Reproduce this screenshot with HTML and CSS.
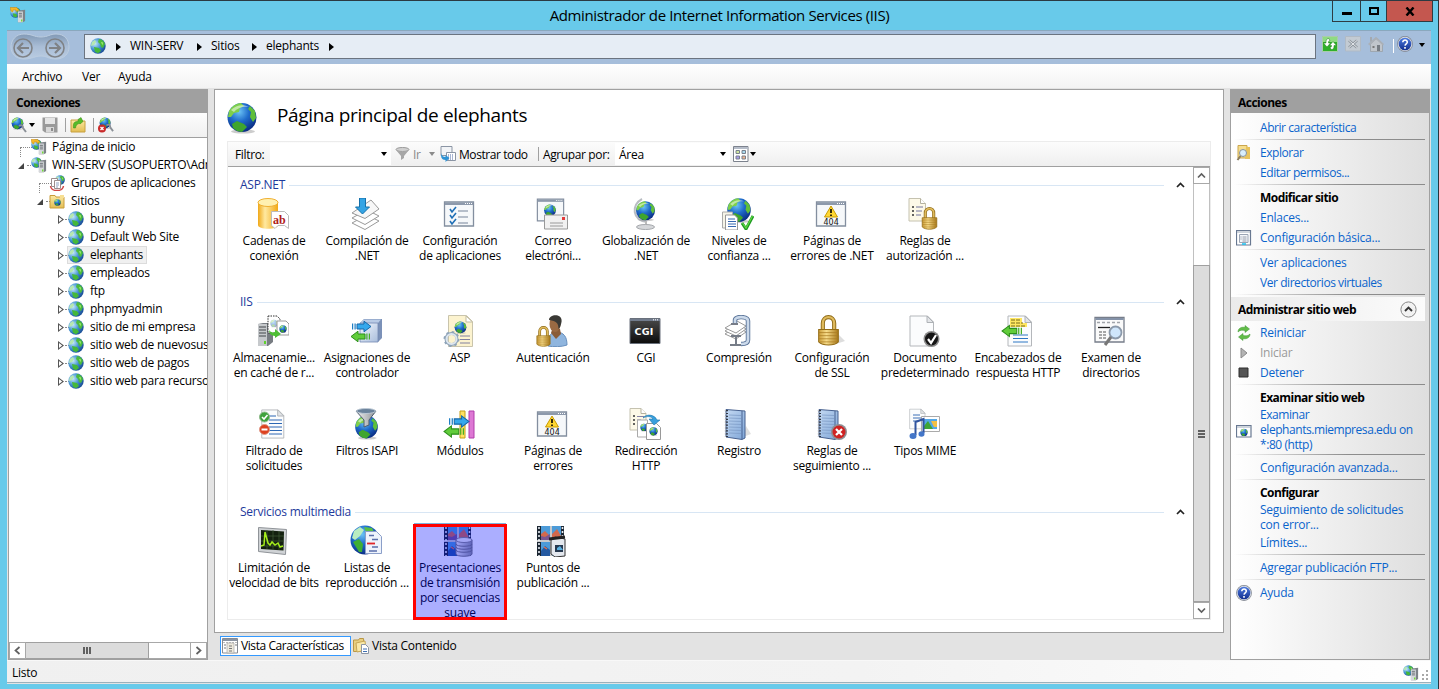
FILE: index.html
```
<!DOCTYPE html>
<html lang="es">
<head>
<meta charset="utf-8">
<title>Administrador de Internet Information Services (IIS)</title>
<link rel="stylesheet" href="styles.css">
</head>
<body>
<svg class="sprite" aria-hidden="true">
  <defs>
    <radialGradient id="gBlue" cx=".4" cy=".3" r=".75"><stop offset="0" stop-color="#6cc4f5"/><stop offset=".45" stop-color="#1f6ccb"/><stop offset="1" stop-color="#08267c"/></radialGradient>
    <radialGradient id="gSky" cx=".3" cy=".35" r=".8"><stop offset="0" stop-color="#c5eafa"/><stop offset=".5" stop-color="#3f8fd0"/><stop offset="1" stop-color="#123f8a"/></radialGradient>
    <linearGradient id="gGold" x1="0" x2="1"><stop offset="0" stop-color="#c99a35"/><stop offset=".4" stop-color="#f7dc8a"/><stop offset="1" stop-color="#a87818"/></linearGradient>
    <linearGradient id="gYel" x1="0" x2="1"><stop offset="0" stop-color="#f0a818"/><stop offset=".35" stop-color="#ffe9a0"/><stop offset="1" stop-color="#f2a814"/></linearGradient>
    <linearGradient id="gGrey" x1="0" x2="1"><stop offset="0" stop-color="#f2f2f2"/><stop offset="1" stop-color="#8d9196"/></linearGradient>
    <linearGradient id="gFold" x1="0" x2="0" y1="0" y2="1"><stop offset="0" stop-color="#fbe9a4"/><stop offset="1" stop-color="#e3bd52"/></linearGradient>
    <linearGradient id="gBlk" x1="0" x2="0" y1="0" y2="1"><stop offset="0" stop-color="#4a4a4a"/><stop offset="1" stop-color="#0c0c0c"/></linearGradient>
    <linearGradient id="gCube" x1="0" x2="1" y1="0" y2="1"><stop offset="0" stop-color="#f4f8ff"/><stop offset="1" stop-color="#a9bddb"/></linearGradient>
    <linearGradient id="gBook" x1="0" x2="1" y1="0" y2="1"><stop offset="0" stop-color="#c4d9f2"/><stop offset="1" stop-color="#7fa6d8"/></linearGradient>
    <linearGradient id="gHelp" x1="0" x2="0" y1="0" y2="1"><stop offset="0" stop-color="#4d7be0"/><stop offset="1" stop-color="#132f8e"/></linearGradient>
    <linearGradient id="gNav" x1="0" x2="0" y1="0" y2="1"><stop offset="0" stop-color="#8199b5"/><stop offset=".5" stop-color="#a9bdd6"/><stop offset="1" stop-color="#b9cce2"/></linearGradient>
  </defs>

  <symbol id="globe" viewBox="0 0 32 32">
    <ellipse cx="17" cy="29.5" rx="12" ry="2" fill="#999" opacity=".5"/>
    <circle cx="16" cy="15.500" r="14.500" fill="url(#gBlue)"/>
    <path d="M3 9C6 4 10 1.500 15 1l3 3-4 2-1 4-5 1-3 4-3 0z" fill="#7fd04a"/>
    <path d="M24 4l5 5 1 7-3 4-3-5 1-5-3-3z" fill="#5fbf3a"/>
    <path d="M6 22l5-3 7 3 3 3-5 5-5-1-4-3z" fill="#3fa52e"/>
    <path d="M5 8c5-5 12-6 18-3-6-1-12 1-15 5z" fill="#fff" opacity=".5"/>
  </symbol>
  <symbol id="site" viewBox="0 0 16 16">
    <circle cx="8" cy="8" r="7.700" fill="url(#gSky)"/>
    <path d="M9 1c3 .5 5 2 6 5l-2 4-2-1-1-3-2-2z" fill="#4cba3c"/>
    <path d="M4 9l5 1 2 3-3 2.300-3-1.500z" fill="#45b83a"/>
    <path d="M2 4l3-2 1 2-2 3-3 1z" fill="#b6e8b0"/>
    <path d="M11 4l2 .5-.5 3z" fill="#a3ea76"/>
  </symbol>
  <symbol id="tower" viewBox="0 0 10 14">
    <path d="M2.500 1L9 0v12.500L6.500 14H1V2z" fill="#7d8288"/><path d="M1 2h5.500v12H1z" fill="#d5d8db"/><path d="M2 4h3.500M2 6h3.500M2 8h3.500" stroke="#60656b"/><path d="M4.500 11h1.500v2H4.500z" fill="#6ede2c"/>
  </symbol>
  <symbol id="server" viewBox="0 0 16 16">
    <use href="#site" x="0" y="0" width="11" height="11"/><use href="#tower" x="7" y="2" width="9" height="14"/>
  </symbol>
  <symbol id="home" viewBox="0 0 16 16">
    <use href="#server" width="16" height="16"/><path d="M0 .5h5l1-.5 3 3-3 1.500V3H3v2L1 4z" fill="#f5b82b" stroke="#c98408" stroke-width=".5"/>
  </symbol>
  <symbol id="pools" viewBox="0 0 16 16">
    <use href="#site" x="6" y="0" width="10" height="10"/><path d="M1.500 11c1 6 12 6 13 0" fill="none" stroke="#d04545" stroke-width="1.500"/>
    <path d="M2.500 3.500h6v8h-6z" fill="#fff" stroke="#9b8d8d"/><path d="M5.500 5.500h6v8h-6z" fill="#fff" stroke="#9b8d8d"/><path d="M7 8h3M7 10h3M7 12h2" stroke="#8fa1c0"/>
  </symbol>
  <symbol id="sitefolder" viewBox="0 0 16 16">
    <path d="M1 2.500h5l1 1.500h8v11H1z" fill="url(#gFold)" stroke="#c99c3b"/><path d="M11 2h4v3h-4z" fill="#f7df93"/><use href="#globe" x="5" y="6" width="7" height="7"/>
  </symbol>
  <symbol id="connect" viewBox="0 0 16 16">
    <use href="#globe" x="0" y="0" width="13" height="13"/><path d="M8 9c3-2 4 0 4 2l3 4" fill="none" stroke="#8b9097" stroke-width="2"/>
  </symbol>
  <symbol id="disconnect" viewBox="0 0 16 16">
    <use href="#connect" x="1" width="15" height="15"/><circle cx="4" cy="11.500" r="4" fill="#c92a2a"/><path d="M2.500 10l3 3m0-3l-3 3" stroke="#fff" stroke-width="1.300"/>
  </symbol>
  <symbol id="save" viewBox="0 0 16 16">
    <path d="M.5.5h15v15H3l-2.500-2z" fill="#9a9a9a"/><path d="M3 1h10v6H3z" fill="#e6e6e6"/><path d="M4 10h8v5H4z" fill="#d8d8d8"/><path d="M9 11h2v3H9z" fill="#8c8c8c"/>
  </symbol>
  <symbol id="upfolder" viewBox="0 0 16 16">
    <path d="M1 3h7l1 1h6v11H1z" fill="url(#gFold)" stroke="#c8a040"/><path d="M3.500 11C3 6 4 4.500 8 4.500V2.500l3-2 2 4-3 2.500V6.500C7 6.500 6 8 5.500 11z" fill="#56bb29" stroke="#358b15" stroke-width=".5"/>
  </symbol>
  <symbol id="funnel" viewBox="0 0 16 16"><ellipse cx="7.500" cy="3.500" rx="6.500" ry="2" fill="#d0d0d0" stroke="#9b9b9b"/><path d="M1 4l5 6v4l3-2v-2l5-6c-3 2-10 2-13 0z" fill="#a6a6a6"/></symbol>
  <symbol id="showall" viewBox="0 0 16 16">
    <path d="M1 .5h11v9H1z" fill="#f2f4f7" stroke="#8b95a4"/><path d="M6.500 6.500h9v8h-9z" fill="#fff" stroke="#8b95a4"/><path d="M8 9h6M8 11h6M8 13h6" stroke="#506ba5" stroke-dasharray="1 1"/><path d="M1.500 7c0 3 2 4 4 4V9l4 3-4 4v-2c-4 0-5-3-4-7z" fill="#2c92d5"/>
  </symbol>
  <symbol id="views" viewBox="0 0 16 16">
    <path d="M.5.500h14.500v15H.5z" fill="#fff" stroke="#7c828d"/><path d="M1 1h14v2H1z" fill="#b6bdc9"/><path d="M3 4.500h3.500v3H3z" fill="#cfe6a0" stroke="#78808c"/><path d="M9 4.500h3.500v3H9z" fill="#a9d9ee" stroke="#78808c"/><path d="M3 10h3.500v3H3z" fill="#a89bea" stroke="#78808c"/><path d="M9 10h3.500v3H9z" fill="#f0b58f" stroke="#78808c"/>
  </symbol>
  <symbol id="help" viewBox="0 0 16 16">
    <circle cx="8" cy="8" r="7.900" fill="#7f858f"/><circle cx="8" cy="8" r="7.200" fill="#d7dbe4"/><circle cx="8" cy="8" r="6.300" fill="url(#gHelp)"/><path d="M5.800 6.200c0-3 4.600-2.800 4.500 0C10.200 7.800 8.100 7.800 8 9.600M8 11v1.700" fill="none" stroke="#fff" stroke-width="1.600"/>
  </symbol>
  <symbol id="refresh" viewBox="0 0 16 16">
    <path d="M.5.500h15v15H.5z" fill="#2fb02a" stroke="#a9cca9"/><path d="M1 1h14v5H1z" fill="#8fdb82"/><path d="M7 2.500C4 2.500 4 5 4 7H1.500L5 11l3.500-4H6.500c0-2 0-2 1.500-2zM9 13.500c3 0 3-2 3-4h2.500L11 5.500 7.500 9.500h2c0 1.500 0 1.500-1.500 1.500z" fill="#fff" stroke="#187c17" stroke-width=".5"/>
  </symbol>
  <symbol id="stopx" viewBox="0 0 16 16"><path d="M.5.500h15v14.500H.5z" fill="#c3cbd3" stroke="#b0bac5"/><path d="M4 4.500l8 7m0-7l-8 7" stroke="#8f979f" stroke-width="2.600"/><path d="M4 4.500l8 7m0-7l-8 7" stroke="#e4e8ec" stroke-width="1"/></symbol>
  <symbol id="house" viewBox="0 0 16 16"><path d="M2.500 8v7.500h12V8L8.500 2z" fill="#c0c5cb" stroke="#989fa7" stroke-width=".8"/><path d="M0 8L8 .8 16 8l-1 1.500-7-6-6.500 6z" fill="#aab0b7"/><path d="M2 1h2v4l-2 1z" fill="#a3a9b0"/><path d="M9 9h3v6H9z" fill="#767c83"/><path d="M4.500 10h2v2h-2z" fill="#777"/></symbol>

  <symbol id="winframe" viewBox="0 0 32 26"><path d="M1.500 1h29v24h-29z" fill="#f6f8fa" stroke="#838e9f" stroke-width="1.300"/><path d="M2 1.500h28v2.500H2z" fill="#8d99ab"/><path d="M22 2.500h7" stroke="#fff" stroke-dasharray="1 1"/></symbol>
  <symbol id="page" viewBox="0 0 26 32"><path d="M1 1h17.500l6 6v24H1z" fill="#fbfcfd" stroke="#b4b7bb"/><path d="M18 1v6.500h6.500z" fill="#e3e5e8" stroke="#aeb2b6"/></symbol>
  <symbol id="lock" viewBox="0 0 20 30"><path d="M4.500 15V8C4.500 0 15.500 0 15.500 8v7" fill="none" stroke="#8f6b18" stroke-width="4"/><path d="M4.500 15V8C4.500 0 15.500 0 15.500 8v7" fill="none" stroke="#dfba5c" stroke-width="2.200"/><path d="M.5 14h19v12c-4 4-15 4-19 0z" fill="url(#gGold)" stroke="#946d16"/><path d="M1 17h18M1 20h18M1 23h18M2 26h16" stroke="#a97c22" stroke-width=".7"/></symbol>
  <symbol id="arrR" viewBox="0 0 20 12"><path d="M5 3.500h7V.700L19 6l-7 5.300V8.500H5z" fill="#35a8ec" stroke="#1667a8"/><path d="M0 3h1.200v6H0zM2.500 3h1.200v6H2.500z" fill="#1e7ec4"/></symbol>
  <symbol id="arrL" viewBox="0 0 20 12"><path d="M15 3.500H8V.700L1 6l7 5.300V8.500h7z" fill="#61cc3b" stroke="#2d8f1b"/><path d="M20 3h-1.200v6H20zM17.500 3h-1.200v6h1.200z" fill="#46b028"/></symbol>
  <symbol id="notebook" viewBox="0 0 32 32"><path d="M21 29l8-3-5-8z" fill="#ccc" opacity=".6"/><path d="M4 1.500l19 1.500v27l-3 1.500L4 29z" fill="url(#gBook)" stroke="#47618f"/><path d="M20 3v28" stroke="#47618f"/><path d="M7 7l12 .5M7 10l12 .5M7 13l12 .5M7 16l12 .5M7 19l12 .5M7 22l12 .5M7 25l12 .5" stroke="#7f9dc8" stroke-width=".8"/><path d="M4.500 2v27" stroke="#303642" stroke-width="3" stroke-dasharray="1.200 1.700"/><path d="M3 2v27" stroke="#e9edf2" stroke-width="1.500" stroke-dasharray="1.200 1.700"/></symbol>
  <symbol id="film" viewBox="0 0 32 32"><path d="M1 1h27v30H1z" fill="#1d2733"/><path d="M5 1h9v14H5zM16 1h9v14h-9zM5 17h9v14H5zM16 17h9v14h-9z" fill="#4c9bd8"/><path d="M5 9l4-3 5 5v4H5zM16 9l5-5 4 7v4h-9z" fill="#d2694c"/><path d="M5 11l4 1 5-3v6H5z" fill="#7a5690"/><path d="M5 26l4-5 5 4v6H5z" fill="#255aa2"/><path d="M8 22l3 2" stroke="#e0704c" stroke-width="1.500"/><path d="M3 2v29M26.500 2v29" stroke="#e8edf2" stroke-width="1.600" stroke-dasharray="2 2"/><path d="M1 16h28M15 0v32" stroke="#fff" stroke-width="1.500"/></symbol>

  <symbol id="i-comp" viewBox="0 0 32 32"><path d="M2 25l15-8 12 6-14 8.500z" fill="#fff" stroke="#999"/><path d="M2 20l15-8 12 6-14 8.500z" fill="#fff" stroke="#999"/><path d="M2 15l19-13 8 9-14 9.500z" fill="#f7f7f7" stroke="#999"/><path d="M9.500 0h6v9h4L12.500 16l-7-7h4z" fill="#35a4e4" stroke="#1570aa"/></symbol>
  <symbol id="i-appcfg" viewBox="0 0 32 32"><use href="#winframe" y="3" width="32" height="26"/><path d="M7 11l2 3 4-5M7 17l2 3 4-5M7 23l2 3 4-5" fill="none" stroke="#1f6fb6" stroke-width="1.600"/><path d="M15 13h10M15 19h10M15 25h10" stroke="#77849a"/></symbol>
  <symbol id="i-mail" viewBox="0 0 32 32"><use href="#winframe" x="0" y="0" width="29" height="24"/><use href="#globe" x="7" y="6" width="14" height="13"/><path d="M8.500 17h23v14h-23z" fill="#f1f1f1" stroke="#999"/><path d="M26 19h3v3h-3z" fill="#e23b3b"/><path d="M14 25h13M14 28h13" stroke="#999"/></symbol>
  <symbol id="i-glob" viewBox="0 0 32 32"><path d="M13 1C2 7 3 22 18 24" fill="none" stroke="#b9bdc2" stroke-width="2"/><use href="#globe" x="6" y="2" width="21" height="22"/><path d="M16 23h2v4h-2z" fill="#bbb"/><ellipse cx="16.500" cy="29" rx="9" ry="2.500" fill="#d5d7da" stroke="#a5a8ac"/></symbol>
  <symbol id="i-trust" viewBox="0 0 32 32"><use href="#globe" x="4" y="-1" width="26" height="27"/><path d="M.5 14h10v16H.5z" fill="#f6f4e8" stroke="#aaa"/><path d="M3.500 17h9l3 3v12h-12z" fill="#fff" stroke="#999"/><path d="M6 21h7M6 23.500h8M6 26h8M6 28.500h8" stroke="#3567b0"/><path d="M20 25l4 6 7-13" fill="none" stroke="#1f9a22" stroke-width="3"/><path d="M20.500 25l3.500 5 6.500-12" fill="none" stroke="#5ed845" stroke-width="1.200"/></symbol>
  <symbol id="i-auth" viewBox="0 0 32 32"><path d="M1 .5h11.500l5 5V23H1z" fill="#fdf9e8" stroke="#c5c2b0"/><path d="M12.500.500v5h5" fill="#fff" stroke="#b5b2a0"/><path d="M4 9h2M4 13h2M4 17h2" stroke="#333" stroke-width="1.600"/><path d="M8 9h7M8 13h6M8 17h5" stroke="#7476a0"/><use href="#lock" x="13" y="9" width="17" height="23"/></symbol>

  <symbol id="i-cache" viewBox="0 0 32 32"><path d="M1 9l5-1h10v19l-5 4H1z" fill="#777c82"/><path d="M1 9h9v22H1z" fill="#c6c9cc"/><path d="M2 12h7M2 15h7M2 18h7M2 21h7" stroke="#42464b"/><path d="M7 26h2v3H7z" fill="#5ed22c"/><path d="M11 1h9l3 3v14H11z" fill="#fff" stroke="#333" stroke-dasharray="1.500 1"/><use href="#globe" x="13" y="4" width="8" height="9" opacity=".4"/><path d="M20 6h9l3 3v11H20z" fill="#fff" stroke="#999"/><use href="#globe" x="22" y="10" width="8" height="8"/><path d="M12 15c1 2 4 3 6 2v-3l6 5-6 4v-2c-4 0-6-3-6-6z" fill="#4fbf35"/></symbol>
  <symbol id="i-map" viewBox="0 0 32 32"><path d="M10 8l4-4h18v19l-4 4H10z" fill="#7b91b8"/><path d="M10 8l4-3.500h17l-3 3.500z" fill="#b9cbe6"/><path d="M10 8h18v19H10z" fill="url(#gCube)" stroke="#7389b2" stroke-width=".8"/><use href="#arrR" x="2" y="5" width="20" height="13"/><use href="#arrL" x="0" y="15" width="20" height="13"/></symbol>
  <symbol id="i-asp" viewBox="0 0 32 32"><path d="M5.500.500h18l6 6v25h-24z" fill="#fcf3cf" stroke="#c9c4ac"/><path d="M23 1v6h6.500z" fill="#fff" stroke="#c2bda2"/><use href="#globe" x="11" y="6" width="13" height="13"/><path d="M17 21h10M17 24.500h10M17 28h10" stroke="#8180a0"/><circle cx="8.500" cy="24" r="5.500" fill="none" stroke="#8ea3b8" stroke-width="3"/><circle cx="8.500" cy="24" r="7" fill="none" stroke="#8ea3b8" stroke-width="2" stroke-dasharray="2.500 3"/><circle cx="8.500" cy="24" r="5" fill="none" stroke="#dde6ee" stroke-width="2"/></symbol>
  <symbol id="i-user" viewBox="0 0 32 32"><path d="M12 31c-1-9 2-13 8-14 8 0 11 5 11 13-5 2-14 2-19 1z" fill="#8fb5de" stroke="#678fbd"/><path d="M17 12l7 2 1 5-5 5-5-6z" fill="#8a5c38"/><ellipse cx="19" cy="9" rx="5.500" ry="8" fill="#9a6a43"/><path d="M13 5c0-6 14-7 12.500 2-1 5-2 6-3 7 0-6-2-8-9.500-9z" fill="#3a3935"/><use href="#lock" x="0" y="11" width="15" height="21"/></symbol>
  <symbol id="i-press" viewBox="0 0 32 32"><path d="M3 19l12-8 9 6-10 7z" fill="#fff" stroke="#999"/><path d="M3 16l12-8 9 6-10 7z" fill="#fff" stroke="#999"/><path d="M3 13l12-7 9 5-10 7z" fill="#fff" stroke="#999"/><path d="M13 10V5c0-4 13-4 13 1v19c0 4-4 4-7 4" fill="none" stroke="#597398" stroke-width="4.500"/><path d="M13 10V5c0-4 13-4 13 1v19c0 4-4 4-7 4" fill="none" stroke="#cbd9ea" stroke-width="2.700"/><path d="M9 9h7M14 21v8M8 30h11M9 21h10" stroke="#777d88" stroke-width="2"/></symbol>
  <symbol id="i-ssl" viewBox="0 0 32 32"><path d="M21 29l9-3-7-7z" fill="#ddd"/><use href="#lock" x="3" y="0" width="21" height="31"/></symbol>
  <symbol id="i-doc" viewBox="0 0 32 32"><use href="#page" x="1" y="0" width="26" height="32"/><circle cx="23.500" cy="24" r="8" fill="#8c8c8c"/><circle cx="23.500" cy="24" r="6.500" fill="#161616"/><path d="M20 24l3 4 5-8" fill="none" stroke="#fff" stroke-width="2.200"/></symbol>
  <symbol id="i-hdr" viewBox="0 0 32 32"><use href="#page" x="6" y="0" width="26" height="32"/><path d="M9 3h12v5h5v4H9z" fill="#ffe761"/><path d="M10 5h10M10 8h12M10 11h15" stroke="#786a1a" stroke-dasharray="4 1"/><path d="M12 20h15M12 23.500h15M12 27h15" stroke="#2c76c4"/><use href="#arrL" x="0" y="9" width="21" height="14"/></symbol>
  <symbol id="i-browse" viewBox="0 0 32 32"><path d="M1 2.500h29v24.500H1z" fill="#fafafa" stroke="#777e8a" stroke-width="1.300"/><path d="M1.500 3h28v2h-28z" fill="#8492a8"/><path d="M3 7.500h23" stroke="#a0a4aa" stroke-width="1.500" stroke-dasharray="3 2"/><path d="M4 12.500h12" stroke="#222" stroke-width="1.300"/><path d="M5 17h8M5 20h8M5 23h8" stroke="#555" stroke-dasharray="3 1"/><circle cx="21.500" cy="17.500" r="6" fill="#cfe6fb" stroke="#8b99aa" stroke-width="1.800"/><path d="M17 22l-6 8" stroke="#777" stroke-width="3"/></symbol>
  <symbol id="i-filter" viewBox="0 0 32 32"><use href="#page" x="3" y="1" width="26" height="30"/><path d="M12 8h7M12 12h13M12 15.500h13M12 19h13M12 22.500h13M12 26h13" stroke="#2c67b4"/><circle cx="7.500" cy="9" r="5" fill="#3fa23c" stroke="#8dba8a"/><path d="M5 9l2 2 3.500-4" fill="none" stroke="#fff" stroke-width="1.600"/><circle cx="7.500" cy="21.500" r="5" fill="#dd4120" stroke="#e09a88"/><path d="M4.500 21.500h6" stroke="#fff" stroke-width="2"/></symbol>
  <symbol id="i-isapi" viewBox="0 0 32 32"><use href="#globe" x="4" y="7" width="25" height="25"/><path d="M6 3l8 9v7l5-2v-5l7-9z" fill="url(#gGrey)" stroke="#4d5c6c"/><ellipse cx="16" cy="3" rx="9.500" ry="2.500" fill="#6a829b" stroke="#bcc8d4"/></symbol>
  <symbol id="i-mod" viewBox="0 0 32 32"><path d="M17 3h5v27h-5z" fill="#ffe162" stroke="#c49f18"/><path d="M26 3h5v27h-5z" fill="#dd78d4" stroke="#b13cab"/><use href="#arrR" x="6" y="7" width="21" height="13"/><use href="#arrL" x="0" y="17" width="21" height="13"/></symbol>
  <symbol id="i-redir" viewBox="0 0 32 32"><path d="M1 .5h11l5 5V22H1z" fill="#fdf9e8" stroke="#c5c2b0"/><path d="M12 .5v5h5" fill="#fff" stroke="#b5b2a0"/><path d="M4 8h2M4 12h2M4 16h2" stroke="#333" stroke-width="1.600"/><path d="M8 8.500h7M8 12h4" stroke="#8482a8"/><path d="M8.500 12h10v17h-10z" fill="#fff" stroke="#aaa"/><use href="#globe" x="11" y="15" width="8" height="9"/><path d="M17.500 15.500h10l4 4v12h-14z" fill="#fff" stroke="#999"/><use href="#globe" x="20" y="19" width="9" height="9"/><path d="M14 10c4-5 12-3 14 2h3l-6 5-5-6h4c-2-3-6-3-10-1z" fill="#39a0dd" stroke="#1d75ac" stroke-width=".6"/></symbol>
  <symbol id="i-log" viewBox="0 0 32 32"><use href="#notebook" width="32" height="32"/></symbol>
  <symbol id="i-trace" viewBox="0 0 32 32"><use href="#notebook" width="32" height="32"/><circle cx="24" cy="24" r="8" fill="#8e9095"/><circle cx="24" cy="24" r="6.500" fill="#cf2323"/><path d="M21 21l6 6m0-6l-6 6" stroke="#fff" stroke-width="2.200"/></symbol>
  <symbol id="i-mime" viewBox="0 0 32 32"><use href="#page" x="1" y="0" width="17" height="22"/><path d="M5 7h7M5 10h8M5 13h5" stroke="#3a6fb6"/><path d="M13.500 8.500h18v15h-18z" fill="#fff" stroke="#aaa"/><path d="M16 11h13v10H16z" fill="#54a8e6"/><path d="M16 18l4-5 5 8h-9z" fill="#3fa536"/><path d="M23 13h6v6h-3z" fill="#f3c045"/><path d="M7.500 27V14l8-3v14" fill="none" stroke="#30549f" stroke-width="2"/><ellipse cx="5" cy="28" rx="3.500" ry="3" fill="#4476c8"/><ellipse cx="13.500" cy="26" rx="3" ry="2.800" fill="#4476c8"/></symbol>

  <symbol id="i-rate" viewBox="0 0 32 32"><path d="M1.500 2.500l28 2-1 25-27-3z" fill="#cfd2d5" stroke="#909499"/><path d="M4 5l23 1.500-.5 19L4 24z" fill="#13200f"/><path d="M4 11h23M4 16h23M4 21h23M10 5v19M16 5v20M22 6v19" stroke="#3f5b36" stroke-width=".7"/><path d="M4 21l3-1 1-13 3 11 2 2 2-3 3 3 3-2 2 4 3-1" fill="none" stroke="#a5ee1c" stroke-width="1.500"/></symbol>
  <symbol id="i-list" viewBox="0 0 32 32"><circle cx="15" cy="15" r="14.500" fill="url(#gBlue)"/><path d="M4 6l6-4 4 3-4 6-5 4-3-2z" fill="#b9edc0"/><path d="M3 17l6-3 4 5-1 8-3 0z" fill="#3fae35"/><path d="M14 2l8 1 2 4h-8z" fill="#58bf45"/><path d="M15.500 6.500h11l5 5v17h-16z" fill="#eef3fc" stroke="#8b9fc9"/><path d="M19 10.500h5M22 14.500h6M22 22h6M19 26h8" stroke="#5a6faa" stroke-width="1.300"/><path d="M17 18.500h8" stroke="#e0262a" stroke-width="1.800"/></symbol>
  <symbol id="i-smooth" viewBox="0 0 32 32"><use href="#film" width="32" height="32"/><path d="M13 15v14c0 3 16 3 16 0V15z" fill="url(#gGrey)" stroke="#777"/><ellipse cx="21" cy="15" rx="8" ry="2.500" fill="#f0f0f0" stroke="#888"/><path d="M13 19c0 3 16 3 16 0M13 22c0 3 16 3 16 0M13 25c0 3 16 3 16 0" fill="none" stroke="#777"/></symbol>
  <symbol id="i-pub" viewBox="0 0 32 32"><use href="#film" width="32" height="32"/><path d="M15 15l4-3 10 2v17l-10 1-4-3z" fill="#e4e8ee" stroke="#333"/><path d="M19 20h8v7h-8z" fill="#263950"/><path d="M21 23l3-2 3 4h-6z" fill="#5ab0e0"/><path d="M13 14l16-2" stroke="#222" stroke-width="3"/></symbol>

  <symbol id="explore" viewBox="0 0 16 16"><path d="M2 .5h9V13H2z" fill="#f6de8d" stroke="#cba64d"/><path d="M10 2h4v12H9z" fill="#e8c35c"/><circle cx="7" cy="8" r="3.500" fill="#d9effc" stroke="#85909c"/><path d="M4.500 11l-3 4" stroke="#8b7d5d" stroke-width="2"/></symbol>
  <symbol id="basic" viewBox="0 0 16 16"><path d="M.5.500h14v14.500H.5z" fill="#fff" stroke="#687891" stroke-width="1.200"/><path d="M1 2h13" stroke="#9eaaba"/><path d="M3.500 4.500h8.500v8H3.500z" fill="#f4f7fb" stroke="#9ba5b5"/><path d="M6.500 7h4M6.500 9h4M6.500 11h4" stroke="#7d8798" stroke-width=".8"/><path d="M4.500 7h1M4.500 9h1" stroke="#7d8798"/><path d="M6 14h4" stroke="#17c0f0" stroke-width="1.500"/></symbol>
  <symbol id="restart" viewBox="0 0 16 16"><path d="M2 7c0-4 4-5.500 7-4.500V.500l4.500 3.500L9 7.500v-2C6 5 4 5 2 7zM14 9c0 4-4 5.500-7 4.500v2L2.500 12 7 8.500v2c3 .5 5 .5 7-1.500z" fill="#62bd49" stroke="#3d9530" stroke-width=".5"/></symbol>
  <symbol id="start" viewBox="0 0 16 16"><path d="M5 3l6 5-6 5z" fill="#b3b3b3" stroke="#8a8a8a"/></symbol>
  <symbol id="halt" viewBox="0 0 16 16"><path d="M3 3h9v9H3z" fill="#555" stroke="#2f2f2f"/></symbol>
  <symbol id="webwin" viewBox="0 0 16 16"><path d="M.5 2.500h14.500v11.500H.5z" fill="#fff" stroke="#687891" stroke-width="1.200"/><path d="M1 4h14" stroke="#9eaaba"/><use href="#globe" x="4" y="5.500" width="8" height="8"/></symbol>
  <symbol id="featview" viewBox="0 0 16 16"><path d="M.5.500h15v14.500H.5z" fill="#fff" stroke="#858b94"/><path d="M1 2h14" stroke="#8b94a2" stroke-width="2"/><path d="M1 4.500h14" stroke="#bbb" stroke-dasharray="2 1"/><path d="M5 5h7v10H5z" fill="#ede9dc" stroke="#aaa" stroke-width=".7"/><path d="M2 7h2M2 10h2M13 7h2M7 8h3M7 10.500h3M7 13h3" stroke="#777"/></symbol>
  <symbol id="contview" viewBox="0 0 16 16"><path d="M.5 2h5l1-1.500h4l1 13h-11z" fill="#e9cf80" stroke="#b99745"/><path d="M3 5l9-2 1 9-9 2z" fill="#f9e8a8" stroke="#c6a656"/><path d="M8.500 6.500h4l3 3v6h-7z" fill="#fff" stroke="#8b95a4"/><path d="M10 11h4M10 13.500h4" stroke="#3e6fb4"/></symbol>
</svg>

<div class="window">
  <header class="titlebar">
    <svg class="i16 app-icon"><use href="#home"/></svg>
    <h1 class="caption">Administrador de Internet Information Services (IIS)</h1>
    <div class="winbtns">
      <span class="wb wb-min"><i></i></span><span class="wb wb-max"><i></i></span>
      <span class="wb wb-close"><svg width="10" height="9" viewBox="0 0 10 9"><path d="M1.500 .5l7 8m0-8l-7 8" stroke="#000" stroke-width="2.400"/></svg></span>
    </div>
  </header>

  <div class="client">
    <div class="addressbar">
      <svg class="nav" width="60" height="28" viewBox="0 0 60 28"><path d="M14 1c8 0 10 3 17 3S40 1 46 1c9 0 13 6 13 13s-5 12-13 12c-8 0-9-3-15-3s-9 3-17 3C6 26 1 21 1 14S6 1 14 1z" fill="url(#gNav)" stroke="#bccde0"/><g fill="none" stroke="#7f8286"><circle cx="13" cy="15" r="9" stroke-width="1.600"/><circle cx="45" cy="15" r="9" stroke-width="1.600"/><path d="M19 15H9m4-5l-5 5 5 5M39 15h10m-4-5l5 5-5 5" stroke-width="2.200"/></g></svg>
      <div class="path">
        <svg class="i16"><use href="#site"/></svg>
        <b class="tri"></b><span class="p1">WIN-SERV</span><b class="tri"></b><span class="p2">Sitios</span><b class="tri"></b><span class="p3">elephants</span><b class="tri"></b>
      </div>
      <div class="addr-tools">
        <svg class="i16"><use href="#refresh"/></svg><svg class="i16"><use href="#stopx"/></svg><svg class="i16"><use href="#house"/></svg>
        <i class="vsep"></i><svg class="i16 hp"><use href="#help"/></svg><b class="down"></b>
      </div>
    </div>
    <nav class="menubar"><span>Archivo</span><span>Ver</span><span>Ayuda</span></nav>

    <div class="body">
      <aside class="panel left">
        <h2 class="ph">Conexiones</h2>
        <div class="ltools">
          <svg class="i16"><use href="#connect"/></svg><b class="down"></b><svg class="i16 sv"><use href="#save"/></svg><i class="gsep"></i><svg class="i16"><use href="#upfolder"/></svg><i class="gsep"></i><svg class="i16"><use href="#disconnect"/></svg>
        </div>
        <div class="tree">
          <div class="row l0"><i class="ex elbow"></i><svg class="i16"><use href="#home"/></svg><span>Página de inicio</span></div>
          <div class="row l0"><i class="ex open"></i><svg class="i16"><use href="#server"/></svg><span class="srv">WIN-SERV (SUSOPUERTO\Administrador)</span></div>
          <div class="row l1"><i class="ex elbow"></i><svg class="i16"><use href="#pools"/></svg><span>Grupos de aplicaciones</span></div>
          <div class="row l1"><i class="ex open"></i><svg class="i16"><use href="#sitefolder"/></svg><span>Sitios</span></div>
          <div class="row l2"><i class="ex shut"></i><svg class="i16"><use href="#site"/></svg><span>bunny</span></div>
          <div class="row l2"><i class="ex shut"></i><svg class="i16"><use href="#site"/></svg><span>Default Web Site</span></div>
          <div class="row l2 sel"><i class="ex shut"></i><svg class="i16"><use href="#site"/></svg><span>elephants</span></div>
          <div class="row l2"><i class="ex shut"></i><svg class="i16"><use href="#site"/></svg><span>empleados</span></div>
          <div class="row l2"><i class="ex shut"></i><svg class="i16"><use href="#site"/></svg><span>ftp</span></div>
          <div class="row l2"><i class="ex shut"></i><svg class="i16"><use href="#site"/></svg><span>phpmyadmin</span></div>
          <div class="row l2"><i class="ex shut"></i><svg class="i16"><use href="#site"/></svg><span>sitio de mi empresa</span></div>
          <div class="row l2"><i class="ex shut"></i><svg class="i16"><use href="#site"/></svg><span>sitio web de nuevosusuarios</span></div>
          <div class="row l2"><i class="ex shut"></i><svg class="i16"><use href="#site"/></svg><span>sitio web de pagos</span></div>
          <div class="row l2"><i class="ex shut"></i><svg class="i16"><use href="#site"/></svg><span>sitio web para recursos</span></div>
        </div>
        <div class="hscroll">
          <svg class="sbtn" width="17" height="17"><path d="M9.500 4L5.500 7.500l4 3.500" fill="none" stroke="#606060" stroke-width="1.700"/></svg>
          <div class="hthumb"><i></i><i></i><i></i></div><div class="htrack"></div>
          <svg class="sbtn" width="17" height="17"><path d="M5.500 4l4 3.500-4 3.500" fill="none" stroke="#606060" stroke-width="1.700"/></svg>
        </div>
      </aside>

      <div class="middle">
        <main class="panel center">
          <div class="heading"><svg width="32" height="32"><use href="#globe"/></svg><h2>Página principal de elephants</h2></div>
          <div class="features">
            <div class="ftools">
              <span class="f-lab">Filtro:</span><div class="combo c1"><b class="down"></b></div>
              <svg class="i16 fun"><use href="#funnel"/></svg><span class="ir">Ir</span><b class="down dim"></b>
              <svg class="i16 sa"><use href="#showall"/></svg><span class="mt">Mostrar todo</span><i class="gsep"></i><span class="ap">Agrupar por:</span>
              <div class="combo c2"><span>Área</span><b class="down"></b></div><svg class="i16"><use href="#views"/></svg><b class="down last"></b>
            </div>
            <div class="fbody">
              <div class="groups">
                <section class="group">
                  <div class="gh"><span>ASP.NET</span><i></i><svg width="9" height="6"><path d="M1 5l3.500-3.500L8 5" fill="none" stroke="#222" stroke-width="1.700"/></svg></div>
                  <div class="grid">
                    <div class="item"><svg viewBox="0 0 32 32"><path d="M1 4v23c0 5 20 5 20 0V4z" fill="url(#gYel)"/><ellipse cx="11" cy="4.500" rx="10" ry="4" fill="#fff0b0" stroke="#efb032"/><path d="M14.500 13.500h13l4 4v13l-4-3H21l-3 3-3.500-3z" fill="#fff" stroke="#bbb"/><text x="16" y="26" class="t-ab">ab</text></svg><p>Cadenas de<br>conexión</p></div>
                    <div class="item"><svg><use href="#i-comp"/></svg><p>Compilación de<br>.NET</p></div>
                    <div class="item"><svg><use href="#i-appcfg"/></svg><p>Configuración<br>de aplicaciones</p></div>
                    <div class="item"><svg><use href="#i-mail"/></svg><p>Correo<br>electróni...</p></div>
                    <div class="item"><svg><use href="#i-glob"/></svg><p>Globalización de<br>.NET</p></div>
                    <div class="item"><svg><use href="#i-trust"/></svg><p>Niveles de<br>confianza ...</p></div>
                    <div class="item"><svg viewBox="0 0 32 32"><use href="#winframe" y="3" width="32" height="26"/><path d="M16 8l6.500 11h-13z" fill="#ffd733" stroke="#c99b00"/><path d="M16 11v4M16 16.500v1.500" stroke="#000" stroke-width="1.600"/><text x="8.500" y="26.500" class="t-404">404</text></svg><p>Páginas de<br>errores de .NET</p></div>
                    <div class="item"><svg><use href="#i-auth"/></svg><p>Reglas de<br>autorización ...</p></div>
                  </div>
                </section>
                <section class="group">
                  <div class="gh"><span>IIS</span><i></i><svg width="9" height="6"><path d="M1 5l3.500-3.500L8 5" fill="none" stroke="#222" stroke-width="1.700"/></svg></div>
                  <div class="grid">
                    <div class="item"><svg><use href="#i-cache"/></svg><p>Almacenamie...<br>en caché de r...</p></div>
                    <div class="item"><svg><use href="#i-map"/></svg><p>Asignaciones de<br>controlador</p></div>
                    <div class="item"><svg><use href="#i-asp"/></svg><p>ASP</p></div>
                    <div class="item"><svg><use href="#i-user"/></svg><p>Autenticación</p></div>
                    <div class="item"><svg viewBox="0 0 32 32"><path d="M1 3.500h30v25H1z" fill="url(#gBlk)" stroke="#6a717c"/><path d="M1 4h30v2H1z" fill="#717b8c"/><path d="M24 4.800h6" stroke="#fff" stroke-dasharray="1 1"/><text x="5.500" y="19.500" class="t-cgi">CGI</text></svg><p>CGI</p></div>
                    <div class="item"><svg><use href="#i-press"/></svg><p>Compresión</p></div>
                    <div class="item"><svg><use href="#i-ssl"/></svg><p>Configuración<br>de SSL</p></div>
                    <div class="item"><svg><use href="#i-doc"/></svg><p>Documento<br>predeterminado</p></div>
                    <div class="item"><svg><use href="#i-hdr"/></svg><p>Encabezados de<br>respuesta HTTP</p></div>
                    <div class="item"><svg><use href="#i-browse"/></svg><p>Examen de<br>directorios</p></div>
                    <div class="item"><svg><use href="#i-filter"/></svg><p>Filtrado de<br>solicitudes</p></div>
                    <div class="item"><svg><use href="#i-isapi"/></svg><p>Filtros ISAPI</p></div>
                    <div class="item"><svg><use href="#i-mod"/></svg><p>Módulos</p></div>
                    <div class="item"><svg viewBox="0 0 32 32"><use href="#winframe" y="3" width="32" height="26"/><path d="M16 8l6.500 11h-13z" fill="#ffd733" stroke="#c99b00"/><path d="M16 11v4M16 16.500v1.500" stroke="#000" stroke-width="1.600"/><text x="8.500" y="26.500" class="t-404">404</text></svg><p>Páginas de<br>errores</p></div>
                    <div class="item"><svg><use href="#i-redir"/></svg><p>Redirección<br>HTTP</p></div>
                    <div class="item"><svg><use href="#i-log"/></svg><p>Registro</p></div>
                    <div class="item"><svg><use href="#i-trace"/></svg><p>Reglas de<br>seguimiento ...</p></div>
                    <div class="item"><svg><use href="#i-mime"/></svg><p>Tipos MIME</p></div>
                  </div>
                </section>
                <section class="group">
                  <div class="gh"><span>Servicios multimedia</span><i></i><svg width="9" height="6"><path d="M1 5l3.500-3.500L8 5" fill="none" stroke="#222" stroke-width="1.700"/></svg></div>
                  <div class="grid">
                    <div class="item"><svg><use href="#i-rate"/></svg><p>Limitación de<br>velocidad de bits</p></div>
                    <div class="item"><svg><use href="#i-list"/></svg><p>Listas de<br>reproducción ...</p></div>
                    <div class="item marked"><svg><use href="#i-smooth"/></svg><p>Presentaciones<br>de transmisión<br>por secuencias<br>suave</p><div class="mark"></div></div>
                    <div class="item"><svg><use href="#i-pub"/></svg><p>Puntos de<br>publicación ...</p></div>
                  </div>
                </section>
              </div>
              <div class="vscroll">
                <svg class="sbtn" width="17" height="17"><path d="M4 9.500L7.500 6l3.500 3.500" fill="none" stroke="#606060" stroke-width="1.700"/></svg>
                <div class="vfree"></div><div class="vthumb"><i></i><i></i><i></i></div>
                <svg class="sbtn" width="17" height="17"><path d="M4 5.500L7.500 9 11 5.500" fill="none" stroke="#606060" stroke-width="1.700"/></svg>
              </div>
            </div>
          </div>
        </main>
        <div class="tabs">
          <div class="tab on"><svg class="i16"><use href="#featview"/></svg><span>Vista Características</span></div>
          <div class="tab"><svg class="i16"><use href="#contview"/></svg><span>Vista Contenido</span></div>
        </div>
      </div>

      <aside class="panel right">
        <h2 class="ph">Acciones</h2>
        <div class="actions">
          <div class="act"><a class="n">Abrir característica</a></div>
          <hr>
          <div class="act"><svg class="i16"><use href="#explore"/></svg><a class="n">Explorar</a></div>
          <div class="act"><a class="n">Editar permisos...</a></div>
          <hr>
          <div class="act"><strong>Modificar sitio</strong></div>
          <div class="act"><a>Enlaces...</a></div>
          <div class="act"><svg class="i16"><use href="#basic"/></svg><a>Configuración básica...</a></div>
          <hr>
          <div class="act"><a>Ver aplicaciones</a></div>
          <div class="act"><a class="n">Ver directorios virtuales</a></div>
          <hr>
          <div class="sub"><strong>Administrar sitio web</strong><svg width="17" height="17"><circle cx="8.500" cy="8.500" r="7.600" fill="#f2f2f2" stroke="#888"/><path d="M5 10l3.500-3.500L12 10" fill="none" stroke="#333" stroke-width="1.900"/></svg></div>
          <div class="act"><svg class="i16"><use href="#restart"/></svg><a>Reiniciar</a></div>
          <div class="act off"><svg class="i16"><use href="#start"/></svg><a>Iniciar</a></div>
          <div class="act"><svg class="i16"><use href="#halt"/></svg><a>Detener</a></div>
          <hr>
          <div class="act"><strong>Examinar sitio web</strong></div>
          <div class="act multi"><svg class="i16"><use href="#webwin"/></svg><a class="n">Examinar<br>elephants.miempresa.edu on<br>*:80 (http)</a></div>
          <hr>
          <div class="act"><a>Configuración avanzada...</a></div>
          <hr>
          <div class="act"><strong>Configurar</strong></div>
          <div class="act multi"><a>Seguimiento de solicitudes<br>con error...</a></div>
          <div class="act"><a>Límites...</a></div>
          <hr>
          <div class="act"><a>Agregar publicación FTP...</a></div>
          <hr>
          <div class="act"><svg class="i16"><use href="#help"/></svg><a>Ayuda</a></div>
        </div>
      </aside>
    </div>
    <footer class="status"><span>Listo</span><svg class="i16"><use href="#server"/></svg><svg class="grip" width="8" height="12"><path d="M5 1h2M5 5h2M5 9h2M1 5h2M1 9h2" stroke="#a8a8a8" stroke-width="2"/></svg></footer>
  </div>
</div>
</body>
</html>
```
FILE: styles.css
```
* { box-sizing: border-box; }
body { margin: 0; font: 12px/15px "Open Sans", "Noto Sans", sans-serif; letter-spacing: -0.24px; color: #000; overflow: hidden; }
h1, h2, p { margin: 0; font-weight: normal; }
svg { display: block; flex: none; }
span, a, strong, p { white-space: nowrap; }
strong { letter-spacing: -0.54px; }
.sprite { position: absolute; width: 0; height: 0; }
.i16 { width: 16px; height: 16px; }

.window { width: 1439px; height: 689px; background: #68caea; border-top: 1px solid #2b3a42; border-right: 1px solid #27363d; display: flex; flex-direction: column; }
.titlebar { height: 29px; display: flex; align-items: flex-start; padding: 0 5px 0 10px; flex: none; }
.app-icon { margin-top: 6px; }
.caption { flex: 1; text-align: center; font-size: 15px; line-height: 29px; padding-left: 81px; letter-spacing: -0.38px; }
.winbtns { display: flex; width: 101px; height: 21px; border: 1px solid #2e3c42; border-top: 0; }
.wb { display: flex; align-items: center; justify-content: center; border-right: 1px solid #2e3c42; }
.wb-min { width: 28px; }
.wb-min i { width: 10px; height: 3px; background: #000; margin-top: 5px; }
.wb-max { width: 26px; }
.wb-max i { width: 10px; height: 8px; border: 2px solid #000; }
.wb-close { flex: 1; background: #c4574f; border-right: 0; }

.client { width: 1424px; height: 654px; margin-left: 7px; background: #e3e3e3; display: flex; flex-direction: column; border-top: 1px solid #8aa8bd; }
.addressbar { height: 33px; background: #a6bedb; display: flex; padding: 2px 0 0 3px; flex: none; }
.path { margin: 1px 0 0 14px; width: 1232px; height: 25px; border: 1px solid #6b7480; background: #e6edf5; display: flex; align-items: center; padding: 0 0 2px 5px; }
.tri { border-left: 5px solid #000; border-top: 4px solid transparent; border-bottom: 4px solid transparent; margin: 2px 0 0 9px; width: 5px; }
.path span { margin-left: 9px; }
.path .tri:nth-of-type(1) { margin-left: 10px; }
.p1 { width: 58px; }
.p2 { width: 32px; }
.p3 { width: 54px; }
.addr-tools { display: flex; padding: 3px 0 0 6px; gap: 7px; }
.vsep { width: 1px; height: 14px; background: #fff; margin: 3px 0 0 2px; }
.hp { margin-left: -4px; }
.addr-tools .i16:nth-of-type(2), .addr-tools .i16:nth-of-type(3) { position: relative; top: 0; }
.down { border-top: 4px solid #000; border-left: 3px solid transparent; border-right: 3px solid transparent; width: 6px; height: 4px; flex: none; align-self: center; }
.addr-tools .down { margin: 7px 0 0 -1px; align-self: flex-start; }
.menubar { height: 24px; flex: none; background: linear-gradient(#fff, #f3f3f3); display: flex; padding: 5px 0 0 15px; }
.menubar span:nth-child(1) { width: 60px; }
.menubar span:nth-child(2) { width: 36px; }

.body { display: flex; height: 571px; padding: 1px 0 0 1px; flex: none; }
.panel { border: 1px solid #a0a0a0; background: #fff; }
.ph { background: #a0a0a0; height: 23px; line-height: 25px; font-size: 12px; font-weight: bold; letter-spacing: -0.5px; padding-left: 7px; }
.left { width: 200px; height: 571px; display: flex; flex-direction: column; overflow: hidden; }
.ltools { height: 25px; background: linear-gradient(#fdfdfd, #f0f0f0); border-bottom: 1px solid #a0a0a0; display: flex; align-items: center; padding-left: 2px; flex: none; }
.ltools .down { margin-left: 2px; }
.sv { margin-left: 7px; }
.gsep { width: 1px; height: 14px; background: #a0a0a0; }
.ltools .gsep { margin: 0 4px 0 7px; }
.tree { flex: 1; overflow: hidden; padding-top: 0; }
.row { height: 18px; display: flex; align-items: center; }
.row span { margin-left: 5px; line-height: 18px; }
.row svg { position: relative; z-index: 1; }
.l1 { padding-left: 19px; }
.l2 { padding-left: 38px; }
.l1 span, .l2 span { margin-left: 6px; }
.ex { width: 22px; height: 18px; flex: none; position: relative; }
.elbow::before { content: ""; position: absolute; left: 11px; top: 9px; width: 11px; height: 9px; border-top: 1px dotted #888; border-left: 1px dotted #888; }
.ex.open::before { content: ""; position: absolute; left: 9px; top: 7px; border: 3px solid #444; border-left-color: transparent; border-top-color: transparent; }
.ex.shut::before { content: ""; position: absolute; left: 11px; top: 5px; width: 6px; height: 9px; background: #555; clip-path: polygon(0 0, 100% 50%, 0 100%, 0 0, 1px 2px, 1px 7px, 4.200px 4.500px, 1px 2px); }
.ex.open::after, .ex.shut::after { content: ""; position: absolute; left: 18px; top: 9px; width: 4px; border-top: 1px dotted #888; }
.l1 .i16, .l2 .i16 { margin-left: -1px; }
.sel span { background: #f0f0f0; border: 1px solid #dcdcdc; padding: 0 3px 0 22px; margin-left: -17px; line-height: 16px; }
.hscroll { height: 17px; display: flex; flex: none; }
.sbtn { background: #fff; border: 1px solid #a8a8a8; width: 17px; height: 17px; }
.hthumb { width: 123px; border: 1px solid #a0a0a0; border-left: 0; background: #dcdcdc; display: flex; justify-content: center; align-items: center; gap: 1px; }
.hthumb i { width: 2px; height: 7px; background: #606060; }
.htrack { flex: 1; border-top: 1px solid #a8a8a8; border-bottom: 1px solid #a8a8a8; }

.middle { width: 1010px; margin-left: 6px; }
.center { height: 544px; padding: 12px 12px 0; }
.heading { display: flex; height: 39px; }
.heading svg { margin-left: -1px; }
.heading h2 { font-size: 19px; line-height: 27px; margin-left: 19px; letter-spacing: -0.36px; }
.features { height: 479px; border: 1px solid #ececec; }
.ftools { height: 25px; border-bottom: 1px solid #a0a0a0; background: linear-gradient(#fcfcfc, #efefef); display: flex; align-items: center; padding-left: 7px; }
.f-lab { width: 35px; letter-spacing: -0.35px; }
.combo { background: #fff; height: 22px; display: flex; align-items: center; }
.combo .down { margin-left: auto; margin-right: 4px; }
.c1 { width: 121px; }
.fun { margin-left: 4px; }
.ir { width: 15px; margin-left: 2px; color: #8a8a8a; }
.dim { border-top-color: #8a8a8a; margin-left: 1px; }
.sa { margin-left: 5px; }
.mt { width: 79px; margin-left: 3px; letter-spacing: -0.42px; }
.ap { width: 72px; margin-left: 4px; letter-spacing: -0.38px; }
.c2 { width: 115px; padding-left: 4px; margin-right: 3px; }
.last { margin-left: 1px; }
.fbody { display: flex; height: 452px; }
.groups { width: 965px; padding-top: 9px; height: 452px; }
.group { margin-bottom: 2px; }
.gh { height: 22px; padding: 0 8px 5px 12px; display: flex; align-items: center; color: #1e3a9c; }
.gh i { flex: 1; height: 1px; background: #d8e6f4; margin: 1px 12px 0 4px; }
.grid { display: grid; grid-template-columns: repeat(10, 93px); grid-auto-rows: 93px; }
.item { position: relative; text-align: center; }
.item svg { width: 32px; height: 32px; margin-left: 29px; }
.item p { margin-top: 3px; margin-left: -1px; }
.marked p { height: 58px; overflow: hidden; }
.mark { position: absolute; left: -1px; top: -1px; width: 94px; height: 96px; border: 3px solid #f00; background: rgba(0, 10, 255, .33); }
.mark::before { content: ""; position: absolute; left: -2px; right: -2px; top: -4px; height: 1px; background: #7fb2dc; }
.vscroll { width: 17px; display: flex; flex-direction: column; }
.vfree { height: 81px; border: 1px solid #c0c0c0; border-width: 0 1px; }
.vthumb { flex: 1; border: 1px solid #a0a0a0; background: #dcdcdc; display: flex; flex-direction: column; align-items: center; justify-content: center; gap: 1px; }
.vthumb i { width: 7px; height: 2px; background: #606060; }
.tabs { display: flex; height: 20px; margin: 3px 0 0 6px; }
.tab { display: flex; align-items: center; padding: 0 0 1px 2px; }
.tab span { margin-left: 3px; }
.on { width: 131px; background: #fff; border: 1px solid #3399ff; padding: 0 0 1px 1px; letter-spacing: -0.42px; }

.right { width: 200px; height: 571px; margin-left: 6px; }
.actions { height: 546px; padding-top: 5px; background: linear-gradient(90deg, #fff, #dedede); }
.act { height: 20px; line-height: 20px; padding-left: 29px; display: flex; align-items: center; }
.act .i16 { margin: 0 8px 0 -24px; }
.act a { color: #0a64cc; }
.act a.n { letter-spacing: -0.44px; }
.act.off a { color: #9a9a9a; }
.act.multi { height: auto; line-height: 15px; }
.multi a { position: relative; top: -1px; }
hr { height: 1px; border: 0; margin: 1px 4px 3px 3px; background: linear-gradient(90deg, rgba(140,140,140,0), #8c8c8c 60%); }
.sub { height: 24px; margin: -1px 4px 2px 0; background: linear-gradient(90deg, #ebebeb, #fbfbfb); display: flex; align-items: center; justify-content: space-between; padding: 0 8px 0 7px; }
.status { height: 23px; margin-top: 1px; flex: none; border-top: 1px solid #f8f8f8; background: linear-gradient(90deg, #f0f0f0, #f3f3f3 60%, #fff); display: flex; align-items: center; padding: 2px 2px 0 5px; border-bottom: 1px solid #9ab0bb; }
.status .i16 { margin-left: auto; }
.grip { margin: 6px 0 0 2px; }

.t-ab { font: bold 12px "Liberation Serif", serif; fill: #b02018; letter-spacing: 0; }
.t-404 { font: 8px "DejaVu Sans", sans-serif; fill: #111; letter-spacing: 0; }
.t-cgi { font: bold 9.500px "DejaVu Sans", sans-serif; fill: #fff; letter-spacing: .2px; }
```
